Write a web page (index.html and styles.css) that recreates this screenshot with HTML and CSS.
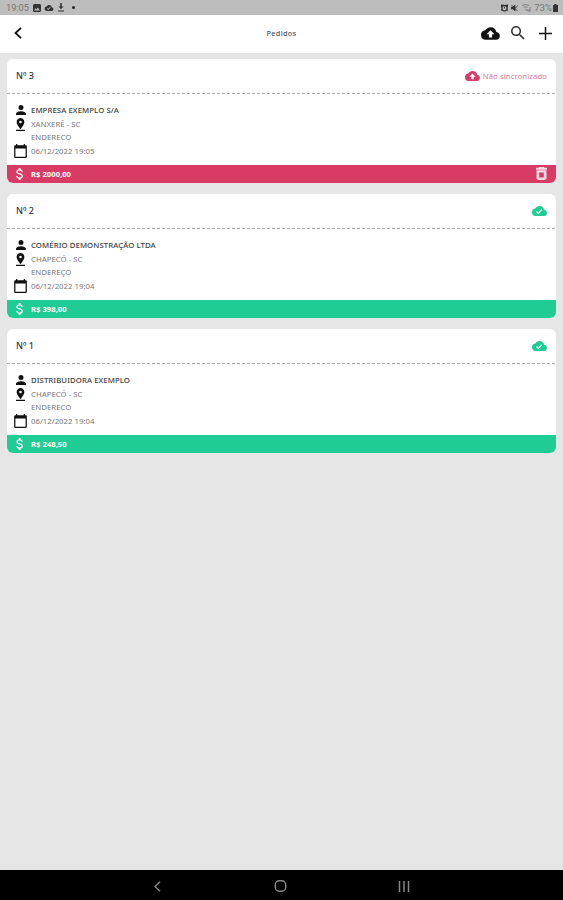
FILE: index.html
```html
<!DOCTYPE html>
<html lang="pt-BR">
<head>
    <meta charset="UTF-8">
    <meta name="viewport" content="width=device-width, initial-scale=1.0">
    <title>Pedidos</title>
    <link rel="stylesheet" href="styles.css">
</head>
<body>
    <!-- Shared icons -->
    <svg class="sprite" aria-hidden="true">
        <symbol id="cloud-up" viewBox="0 4 24 16"><path d="M19.35 10.04A7.49 7.49 0 0 0 12 4C9.11 4 6.6 5.64 5.35 8.04A6 6 0 0 0 6 20h13a5 5 0 0 0 .35-9.96zM14 13v4h-4v-4H7l5-5 5 5h-3z"/></symbol>
        <symbol id="cloud-ok" viewBox="0 4 24 16"><path d="M19.35 10.04A7.49 7.49 0 0 0 12 4C9.11 4 6.6 5.64 5.35 8.04A6 6 0 0 0 6 20h13a5 5 0 0 0 .35-9.96zM10 17l-3.5-3.5 1.4-1.4 2.1 2.1 5.2-5.2 1.4 1.4L10 17z"/></symbol>
        <symbol id="person" viewBox="4 4 16 16"><path d="M12 12a4 4 0 1 0 0-8 4 4 0 0 0 0 8zm0 2c-2.67 0-8 1.34-8 4v2h16v-2c0-2.66-5.33-4-8-4z"/></symbol>
        <symbol id="pin" viewBox="5 2 14 20"><path d="M18 8c0-3.31-2.69-6-6-6S6 4.690 6 8c0 4.500 6 11 6 11s6-6.500 6-11zm-8 0a2 2 0 1 1 4 0 2 2 0 0 1-4 0zM5 20v2h14v-2H5z"/></symbol>
        <symbol id="calendar" viewBox="2 1 20 22"><path d="M20 3h-1V1h-2v2H7V1H5v2H4a2 2 0 0 0-2 2v16c0 1.100.9 2 2 2h16a2 2 0 0 0 2-2V5a2 2 0 0 0-2-2zm0 18H4V8h16v13z"/></symbol>
        <symbol id="money" viewBox="6 3 12 18"><path d="M11.800 10.900c-2.270-.59-3-1.200-3-2.150 0-1.090 1.010-1.850 2.700-1.850 1.780 0 2.440.85 2.500 2.100h2.210c-.07-1.720-1.120-3.300-3.210-3.810V3h-3v2.160c-1.940.42-3.500 1.680-3.500 3.610 0 2.310 1.910 3.460 4.700 4.130 2.500.6 3 1.480 3 2.410 0 .69-.49 1.790-2.700 1.790-2.060 0-2.870-.92-2.980-2.100h-2.200c.12 2.190 1.760 3.420 3.680 3.830V21h3v-2.150c1.950-.37 3.500-1.500 3.500-3.550 0-2.840-2.430-3.810-4.700-4.400z"/></symbol>
    </svg>

    <div class="status">
        <div class="status-left">
            <span class="clock">19:05</span>
            <svg class="st-photo" viewBox="0 0 8 8"><path fill-rule="evenodd" d="M1 0h6l1 1v6L7 8H1L0 7V1zM1.200 6.500h5.600L5 3.500 3.500 5.300l-1-1z"/></svg>
            <svg class="st-cloud"><use href="#cloud-ok"/></svg>
            <svg class="st-down" viewBox="0 0 6 9"><path d="M2.200 0h1.600v3.500H5.500L3 6.200.5 3.500h1.700zM0 7.500h6v1H0z"/></svg>
            <i class="dot"></i>
        </div>
        <div class="status-right">
            <svg class="st-alarm" viewBox="0 0 8 8"><path fill-rule="evenodd" d="M0 0h2.500l.5.500h2L5.500 0H8v2.500L7.500 4 8 7H6.500L5 8H3L1.500 7H0l.5-3L0 2.500zM2 3v2.500L3 6.500h2l1-1V3L5 2H3zM3.500 2.500h1v2h-1z"/></svg>
            <svg class="st-mute" viewBox="0 0 8 8"><path d="M0 2.500h2L5 0v8L2 5.500H0z"/><path d="M.5.500l7 7M5 4l3-3" fill="none" stroke="currentColor"/></svg>
            <svg class="st-signal" viewBox="0 0 9 8"><path d="M0 1.500Q3.500-.5 7 1.500M1.500 3.500Q3.500 2 5.500 3.500M3 5.500l5 2M8 3v4.500M6 5v2" fill="none" stroke="currentColor" stroke-width=".9"/></svg>
            <span class="percent">73%</span>
            <svg class="st-battery" viewBox="0 0 5 8"><path d="M1.500 0h2v1H5v7H0V1h1.500z"/></svg>
        </div>
    </div>

    <header class="header">
        <svg class="back" viewBox="0 0 8 12"><path d="M7 .8L1.500 6 7 11.200"/></svg>
        <h1 class="title">Pedidos</h1>
        <div class="actions">
            <svg class="act-cloud"><use href="#cloud-up"/></svg>
            <svg class="act-search" viewBox="3 3 18 18"><path d="M15.500 14h-.79l-.28-.27A6.470 6.470 0 0 0 16 9.500 6.500 6.500 0 1 0 9.500 16c1.610 0 3.090-.59 4.230-1.570l.27.28v.79l5 4.990L20.490 19l-4.990-5zm-6 0a4.500 4.500 0 1 1 0-9 4.500 4.500 0 0 1 0 9z"/></svg>
            <svg class="act-plus" viewBox="0 0 14 14"><path d="M6.200 0h1.600v6.200H14v1.600H7.800V14H6.200V7.800H0V6.200h6.200z"/></svg>
        </div>
    </header>

    <main class="list">
        <article class="card pending">
            <div class="card-head">
                <span class="number">Nº 3</span>
                <span class="sync"><svg class="sync-icon"><use href="#cloud-up"/></svg><span class="sync-text">Não sincronizado</span></span>
            </div>
            <div class="card-body">
                <div class="row name"><svg class="ic-person"><use href="#person"/></svg><span>EMPRESA EXEMPLO S/A</span></div>
                <div class="row"><svg class="ic-pin"><use href="#pin"/></svg><span>XANXERÊ - SC</span></div>
                <div class="row address"><span>ENDERECO</span></div>
                <div class="row"><svg class="ic-date"><use href="#calendar"/></svg><span>06/12/2022 19:05</span></div>
            </div>
            <div class="card-foot">
                <svg class="ic-money"><use href="#money"/></svg>
                <span>R$ 2000,00</span>
                <svg class="ic-trash" viewBox="0 0 11 13"><path fill-rule="evenodd" d="M3 0h5l.5.700H11v2H0v-2h2.500zM.5 3.200h10v8.300L9 13H2L.5 11.500zM3.200 5.500v5h4.600v-5z"/></svg>
            </div>
        </article>

        <article class="card">
            <div class="card-head">
                <span class="number">Nº 2</span>
                <span class="sync"><svg class="sync-icon"><use href="#cloud-ok"/></svg></span>
            </div>
            <div class="card-body">
                <div class="row name"><svg class="ic-person"><use href="#person"/></svg><span>COMÉRIO DEMONSTRAÇÃO LTDA</span></div>
                <div class="row"><svg class="ic-pin"><use href="#pin"/></svg><span>CHAPECÓ - SC</span></div>
                <div class="row address"><span>ENDEREÇO</span></div>
                <div class="row"><svg class="ic-date"><use href="#calendar"/></svg><span>06/12/2022 19:04</span></div>
            </div>
            <div class="card-foot">
                <svg class="ic-money"><use href="#money"/></svg>
                <span>R$ 398,00</span>
            </div>
        </article>

        <article class="card">
            <div class="card-head">
                <span class="number">Nº 1</span>
                <span class="sync"><svg class="sync-icon"><use href="#cloud-ok"/></svg></span>
            </div>
            <div class="card-body">
                <div class="row name"><svg class="ic-person"><use href="#person"/></svg><span>DISTRIBUIDORA EXEMPLO</span></div>
                <div class="row"><svg class="ic-pin"><use href="#pin"/></svg><span>CHAPECÓ - SC</span></div>
                <div class="row address"><span>ENDERECO</span></div>
                <div class="row"><svg class="ic-date"><use href="#calendar"/></svg><span>06/12/2022 19:04</span></div>
            </div>
            <div class="card-foot">
                <svg class="ic-money"><use href="#money"/></svg>
                <span>R$ 248,50</span>
            </div>
        </article>
    </main>

    <nav class="navbar">
        <svg class="nav-back" viewBox="0 0 7 11"><path d="M6 .8L1 5.500l5 4.700"/></svg>
        <svg class="nav-home" viewBox="0 0 12 12"><rect x=".8" y=".8" width="10.400" height="10.400" rx="4"/></svg>
        <svg class="nav-recent" viewBox="0 0 12 11"><path d="M1.500 0v11M6 0v11M10.500 0v11"/></svg>
    </nav>
</body>
</html>
```
FILE: styles.css
```css
body {
    display: flex;
    flex-direction: column;
    height: 100vh;
    margin: 0;
    background: #e6e6e6;
    font-family: "Noto Sans", "Open Sans", sans-serif;
    font-size: 7.8px;
    color: #333;
    overflow: hidden;
}
svg {
    display: block;
    flex: none;
    fill: currentColor;
}
.sprite {
    display: none;
}

/* Status bar */
.status {
    display: flex;
    justify-content: space-between;
    align-items: center;
    height: 15px;
    padding: 0 5px 0 6px;
    background: #bdbdbd;
    color: #333;
}
.status-left,
.status-right {
    display: flex;
    align-items: center;
}
.clock,
.percent {
    font-family: Roboto, sans-serif;
    font-size: 9.6px;
    line-height: 15px;
    color: #777;
}
.clock {
    width: 27px;
    font-size: 9.2px;
}
.st-photo { width: 8px; height: 8px; }
.st-cloud { width: 10px; height: 6px; margin-left: 3px; }
.st-down { width: 6px; height: 9px; margin-left: 4px; }
.dot {
    width: 3px;
    height: 3px;
    margin-left: 8px;
    border-radius: 50%;
    background: #222;
}
.st-alarm { width: 7px; height: 8px; }
.st-mute { width: 7px; height: 8px; margin-left: 3px; }
.st-signal { width: 9px; height: 8px; margin: 0 3px 0 4px; color: #777; }
.st-battery { width: 5px; height: 8px; margin-left: 1px; }

/* Header */
.header {
    display: grid;
    grid-template-columns: 1fr auto 1fr;
    align-items: center;
    height: 38px;
    padding: 0 11px 2px 14px;
    box-sizing: border-box;
    background: #fff;
    color: #111;
}
.back {
    width: 8px;
    height: 12px;
    fill: none;
    stroke: #111;
    stroke-width: 1.8;
}
.title {
    margin: 0 3px 0 0;
    font-size: 7.4px;
    font-weight: 500;
    letter-spacing: 0.25px;
    color: #555;
}
.actions {
    display: flex;
    justify-content: flex-end;
    align-items: center;
}
.act-cloud { width: 19px; height: 13px; }
.act-search { width: 14px; height: 14px; margin-left: 11px; color: #333; }
.act-plus { width: 13px; height: 13px; margin-left: 14px; }

/* Orders */
.list {
    display: flex;
    flex: 1;
    flex-direction: column;
    gap: 11px;
    padding: 6px 7px 0;
}
.card {
    display: flex;
    flex-direction: column;
    height: 124px;
    border-radius: 6px;
    overflow: hidden;
    background: #fff;
    --accent: #1fcd94;
}
.pending {
    --accent: #d83c66;
}
.card-head {
    display: flex;
    justify-content: space-between;
    align-items: center;
    height: 35px;
    padding: 0 9px 2px;
    box-sizing: border-box;
    background: repeating-linear-gradient(90deg, #aaa 0 3px, transparent 3px 5px) bottom / 100% 1px no-repeat;
}
.number {
    font-size: 9px;
    font-weight: 500;
}
.sync {
    display: flex;
    align-items: center;
    gap: 3px;
    color: var(--accent);
}
.sync-icon {
    width: 15px;
    height: 10px;
}
.sync-text {
    font-size: 7.7px;
    letter-spacing: 0.1px;
    color: #df7896;
}
.card-body {
    flex: 1;
    padding: 8px 7px 0;
}
.row {
    display: grid;
    grid-template-columns: 13px 1fr;
    column-gap: 4px;
    align-items: center;
    justify-items: center;
    height: 13px;
    color: #777;
}
.row svg {
    color: #111;
}
.row span {
    justify-self: start;
    line-height: 13px;
    white-space: nowrap;
}
.name {
    height: 16px;
    color: #444;
}
.name span {
    font-weight: 500;
    letter-spacing: 0.06px;
}
.address span {
    grid-column: 2;
}
.ic-person { width: 10px; height: 10px; }
.ic-pin { width: 9px; height: 13px; }
.ic-date { width: 13px; height: 14px; }
.card-foot {
    display: flex;
    align-items: center;
    height: 18.500px;
    padding: 0 9px;
    background: var(--accent);
    color: #fff;
}
.card-foot span {
    margin-left: 7px;
    font-size: 7.7px;
    font-weight: 700;
}
.ic-money { width: 8px; height: 12px; }
.ic-trash {
    width: 11px;
    height: 13px;
    margin-left: auto;
    color: #f9dbe3;
}

/* Android buttons */
.navbar {
    display: flex;
    justify-content: space-between;
    align-items: center;
    height: 30px;
    padding: 2px 153px 0 154px;
    box-sizing: border-box;
    background: #000;
}
.navbar svg {
    fill: none;
    stroke: #888;
    stroke-width: 1.5;
}
.nav-back { width: 7px; height: 11px; }
.nav-home { width: 13px; height: 12px; margin-left: 2px; }
.nav-recent { width: 12px; height: 11px; }
```
